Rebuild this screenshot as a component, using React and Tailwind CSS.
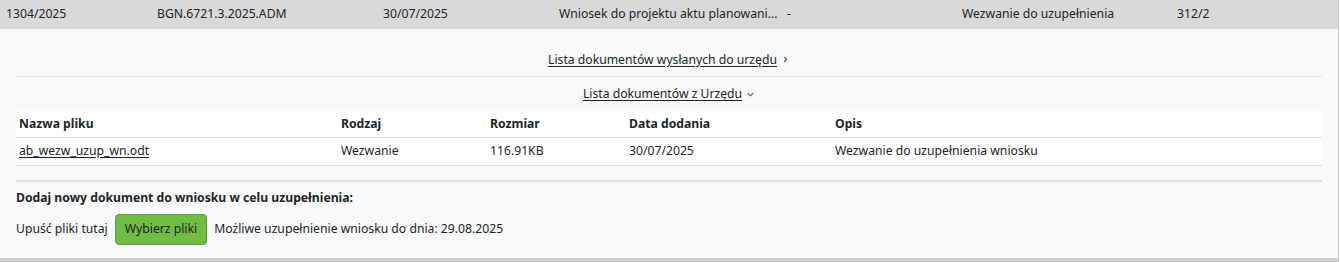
import React from 'react';

// Wiersz sprawy z rozwiniętym panelem dokumentów
const summary = [
  { text: '1304/2025', w: 'w-[151px]' },
  { text: 'BGN.6721.3.2025.ADM', w: 'w-[226px]' },
  { text: '30/07/2025', w: 'w-[176px]' },
  { text: 'Wniosek do projektu aktu planowani...', w: 'w-[228px]' },
  { text: '-', w: 'w-[175px]' },
  { text: 'Wezwanie do uzupełnienia', w: 'w-[215px]' },
  { text: '312/2', w: 'flex-1' }
];

const files = [
  {
    name: 'ab_wezw_uzup_wn.odt',
    kind: 'Wezwanie',
    size: '116.91KB',
    date: '30/07/2025',
    desc: 'Wezwanie do uzupełnienia wniosku'
  }
];

const Chevron = ({ down }) => (
  <svg width="9" height="9" viewBox="0 0 10 10" className="ml-1 inline-block" fill="none" stroke="#555" strokeWidth="1.2">
    {down ? <path d="M2 3.5 L5 6.5 L8 3.5" /> : <path d="M3.5 2 L6.5 5 L3.5 8" />}
  </svg>
);

const App = () => {
  return (
    <div
      className="w-[1340px] h-[262px] overflow-hidden bg-white text-[12.2px] text-[#212529]"
      style={{ fontFamily: '"Noto Sans", "Open Sans", sans-serif' }}
    >
      <div className="w-[1339px] border-r border-b-4 border-[#cfcfcf] bg-[#f8f9fa]">
        {/* Wiersz sprawy */}
        <div className="flex h-[29px] items-center bg-[#d9d9d9] pl-[6px]">
          {summary.map((c, i) => (
            <div key={i} className={`${c.w} shrink-0 whitespace-nowrap`}>
              {c.text}
            </div>
          ))}
        </div>

        <div className="px-4 pb-[13px]">
          <div className="flex h-[48px] items-end justify-center border-b border-[#e1e2e6] pb-[7px]">
            <a href="#" className="flex items-center underline underline-offset-2">
              Lista dokumentów wysłanych do urzędu <Chevron />
            </a>
          </div>
          <div className="flex h-[34px] items-center justify-center pt-[1px]">
            <a href="#" className="flex items-center underline underline-offset-2">
              Lista dokumentów z Urzędu <Chevron down />
            </a>
          </div>

          <table className="w-full border-collapse bg-white text-left">
            <thead>
              <tr className="h-[26px] border-b border-[#dcdde1]">
                <th className="w-[325px] pl-[3px] font-bold">Nazwa pliku</th>
                <th className="w-[149px] font-bold">Rodzaj</th>
                <th className="w-[139px] font-bold">Rozmiar</th>
                <th className="w-[206px] font-bold">Data dodania</th>
                <th className="font-bold">Opis</th>
              </tr>
            </thead>
            <tbody>
              {files.map((f) => (
                <tr key={f.name} className="h-[28px] border-b border-[#dcdde1]">
                  <td className="pl-[3px]">
                    <a href="#" className="underline underline-offset-2">
                      {f.name}
                    </a>
                  </td>
                  <td>{f.kind}</td>
                  <td>{f.size}</td>
                  <td>{f.date}</td>
                  <td>{f.desc}</td>
                </tr>
              ))}
            </tbody>
          </table>

          <div className="mt-[14px] border-t-2 border-[#e0e1e5] pt-[7px]">
            <div className="font-bold">Dodaj nowy dokument do wniosku w celu uzupełnienia:</div>
            <div className="mt-[7px] flex items-center gap-[7px]">
              <span>Upuść pliki tutaj</span>
              <button className="h-[31px] rounded border border-[#5b9e3a] bg-[#70bc45] px-[9px] text-[#212529]">
                Wybierz pliki
              </button>
              <span>Możliwe uzupełnienie wniosku do dnia: 29.08.2025</span>
            </div>
          </div>
        </div>
      </div>
    </div>
  );
};

export default App;
